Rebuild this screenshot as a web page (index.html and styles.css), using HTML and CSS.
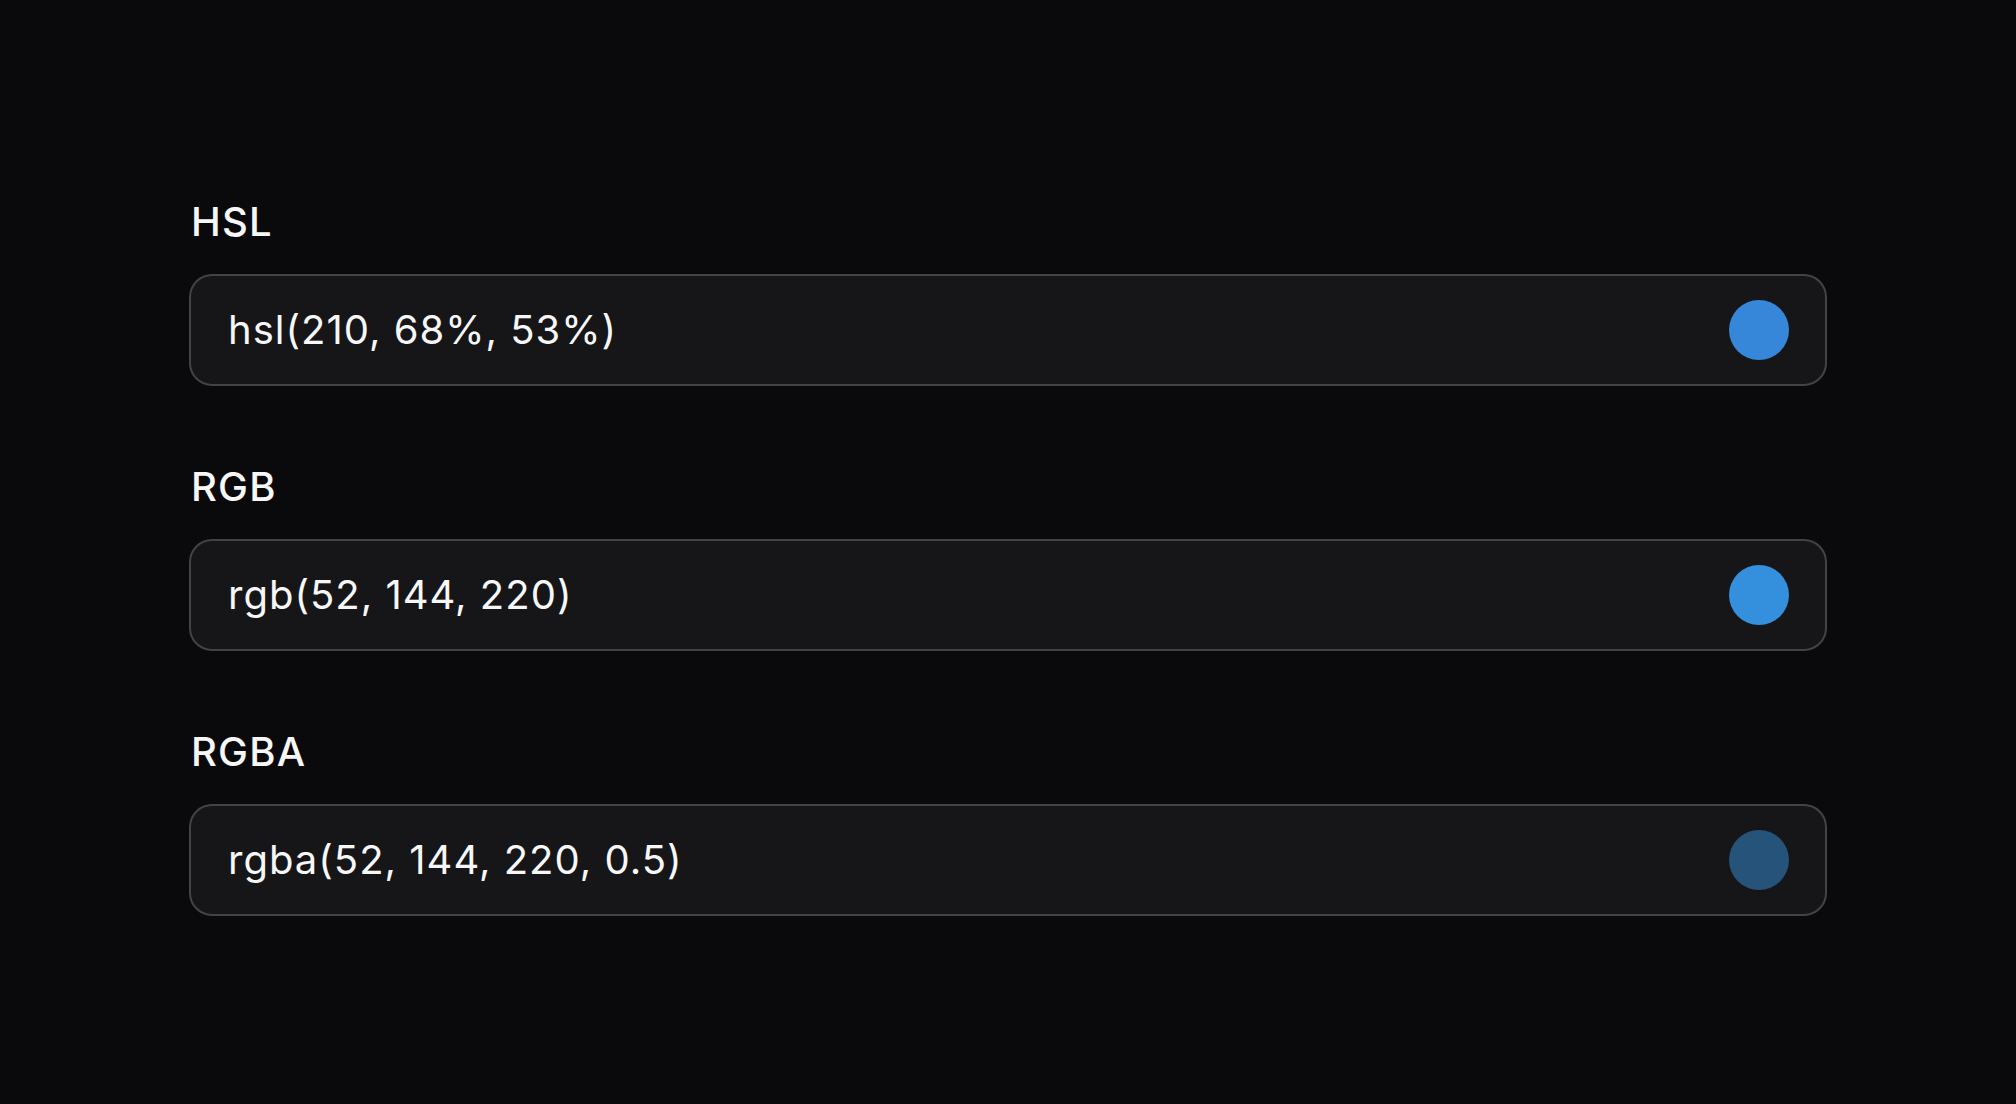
FILE: index.html
```html
<!DOCTYPE html>
<html lang="en">
<head>
    <meta charset="UTF-8">
    <meta name="viewport" content="width=device-width, initial-scale=1.0">
    <title>Color Formats</title>
    <link rel="stylesheet" href="styles.css">
</head>
<body>
    <div class="container">
        <div class="field">
            <label for="hslInput">HSL</label>
            <div class="color-input">
                <input type="text" id="hslInput" value="hsl(210, 68%, 53%)" readonly>
                <span class="swatch swatch-hsl"></span>
            </div>
        </div>

        <div class="field">
            <label for="rgbInput">RGB</label>
            <div class="color-input">
                <input type="text" id="rgbInput" value="rgb(52, 144, 220)" readonly>
                <span class="swatch swatch-rgb"></span>
            </div>
        </div>

        <div class="field">
            <label for="rgbaInput">RGBA</label>
            <div class="color-input">
                <input type="text" id="rgbaInput" value="rgba(52, 144, 220, 0.5)" readonly>
                <span class="swatch swatch-rgba"></span>
            </div>
        </div>
    </div>
</body>
</html>
```

FILE: styles.css
```css
body {
    font-family: Inter, "Noto Sans", sans-serif;
    background-color: #0a0a0c;
    color: #f7f7f8;
    margin: 0;
    padding: 0;
    height: 100vh;
}
.container {
    width: 1638px;
    margin: 0 auto;
    padding-top: 198px;
    display: flex;
    flex-direction: column;
    gap: 77px;
}
.field {
    display: flex;
    flex-direction: column;
    gap: 28px;
}
label {
    display: block;
    font-size: 40px;
    font-weight: 500;
    line-height: 48px;
    letter-spacing: 1.2px;
    padding-left: 2px;
}
.color-input {
    display: flex;
    align-items: center;
    height: 108px;
    padding: 0 36px 0 37px;
    background-color: #161618;
    border: 2px solid #434346;
    border-radius: 23px;
}
.color-input input {
    flex: 1;
    background: transparent;
    border: none;
    outline: none;
    padding: 0;
    font-family: inherit;
    font-size: 40px;
    line-height: 48px;
    letter-spacing: 1px;
    color: #f7f7f8;
}
.swatch {
    width: 60px;
    height: 60px;
    border-radius: 50%;
    flex-shrink: 0;
}
.swatch-hsl {
    background-color: hsl(210, 68%, 53%);
}
.swatch-rgb {
    background-color: rgb(52, 144, 220);
}
.swatch-rgba {
    background-color: rgba(52, 144, 220, 0.5);
}
```
